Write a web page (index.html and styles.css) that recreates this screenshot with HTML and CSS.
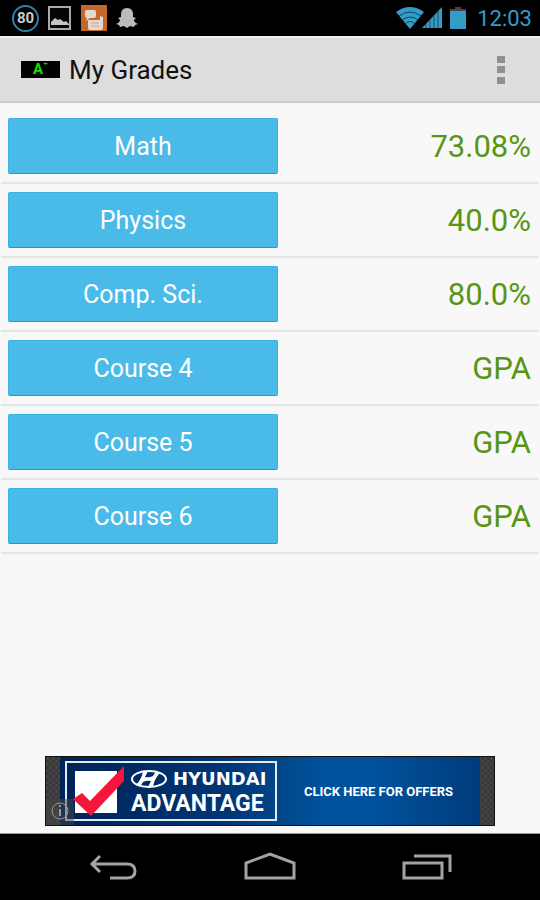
FILE: index.html
```html
<!DOCTYPE html>
<html lang="en">
<head>
    <meta charset="UTF-8">
    <meta name="viewport" content="width=device-width, initial-scale=1.0">
    <title>My Grades</title>
    <link rel="stylesheet" href="styles.css">
</head>
<body>
    <!-- Status bar -->
    <div class="status-bar">
        <div class="notifications">
            <span class="battery-level">80</span>
            <svg width="24" height="26" viewBox="0 0 24 26">
                <rect x="1" y="2" width="21" height="22" fill="#050505" stroke="#aaa" stroke-width="2"/>
                <path d="M3 20v-3l4-4 3 2 2-1 4 3 2-1 3 3v1z" fill="#c4c4c4"/>
            </svg>
            <svg width="26" height="26" viewBox="0 0 26 26">
                <rect width="26" height="26" fill="#c5662b"/>
                <path d="M6 5h7q2 0 2 2v4q0 2-2 2H9l-4 3 1-3q-2 0-2-2V7q0-2 2-2z" fill="#e2d8d0"/>
                <path d="M7 15h12v-4l3 1v11q0 2-2 2H9q-2 0-2-2z" fill="#e2d8d0"/>
                <path d="M10 18h8M10 21h8" stroke="#d5a384"/>
            </svg>
            <svg width="22" height="22" viewBox="0 0 22 22">
                <path d="M11 1c-4 0-6 3-6 6v3l-3 1 2 2c0 2-2 3-4 4l3 1 1 2 4-1 3 2 3-2 4 1 1-2 3-1c-2-1-4-2-4-4l2-2-3-1V7c0-3-2-6-6-6z" fill="#bbb"/>
            </svg>
        </div>
        <div class="system">
            <svg width="48" height="24" viewBox="0 0 48 24">
                <path d="M0 6Q14-4 28 6L14 23z" fill="#359cc8"/>
                <path d="M3 10Q14 2 25 10M6 14Q14 8 22 14M9 18Q14 13 19 18" fill="none" stroke="#0d4259" stroke-width="1"/>
                <path d="M26 22L46 1v21z" fill="#359cc8"/>
                <path d="M30 18v4M34 14v8M38 9v13M42 5v17" stroke="#125069"/>
            </svg>
            <svg class="battery" width="16" height="24" viewBox="0 0 16 24">
                <path d="M5 1h6v2h5v3H0V3h5z" fill="#464646"/>
                <path d="M0 5h16v18H0z" fill="#359cc8"/>
            </svg>
            <span class="clock">12:03</span>
        </div>
    </div>

    <!-- Action bar -->
    <header class="action-bar">
        <span class="app-icon">A<sup>-</sup></span>
        <h1>My Grades</h1>
        <button class="menu-button" aria-label="More options">
            <svg width="8" height="30" viewBox="0 0 8 30">
                <path d="M0 1h8v7H0zM0 11h8v7H0zM0 22h8v7H0z" fill="#919191"/>
            </svg>
        </button>
    </header>

    <!-- Courses -->
    <main>
        <ul class="course-list">
            <li class="course">
                <button class="course-button">Math</button>
                <span class="grade">73.08%</span>
            </li>
            <li class="course">
                <button class="course-button">Physics</button>
                <span class="grade">40.0%</span>
            </li>
            <li class="course">
                <button class="course-button">Comp. Sci.</button>
                <span class="grade">80.0%</span>
            </li>
            <li class="course">
                <button class="course-button">Course 4</button>
                <span class="grade">GPA</span>
            </li>
            <li class="course">
                <button class="course-button">Course 5</button>
                <span class="grade">GPA</span>
            </li>
            <li class="course">
                <button class="course-button">Course 6</button>
                <span class="grade">GPA</span>
            </li>
        </ul>
    </main>

    <!-- Ad banner -->
    <a class="ad" href="#">
        <span class="ad-body">
            <span class="ad-logo">
                <svg width="52" height="52" viewBox="0 0 52 52">
                    <path d="M2 6h42v42H2z" fill="#fff"/>
                    <path d="M0 34l9-6 8 8L51 1v15L18 51z" fill="#f5163b"/>
                </svg>
                <span class="ad-name">
                    <span class="ad-brand">
                        <svg width="36" height="20" viewBox="0 0 36 20">
                            <ellipse cx="18" cy="10" rx="17" ry="8" fill="none" stroke="#fff" stroke-width="2"/>
                            <path d="M12 3l5-1-3 6q4 1 8-1l3-5 4 2q-5 5-7 13l-5 1 3-6q-4-1-8 1l-3 5-4-2q5-5 7-13z" fill="#fff"/>
                        </svg>
                        HYUNDAI
                    </span>
                    <span class="ad-title">ADVANTAGE</span>
                </span>
            </span>
            <span class="ad-offer">CLICK HERE FOR OFFERS</span>
        </span>
        <span class="ad-info">
            <svg width="28" height="26" viewBox="0 0 28 26">
                <circle cx="14" cy="12" r="8" fill="none" stroke="#999" stroke-width="1"/>
                <path d="M14 10v7M14 6v2" stroke="#999" stroke-width="2"/>
            </svg>
        </span>
    </a>

    <!-- Navigation bar -->
    <nav class="nav-bar">
        <button class="nav-button" aria-label="Back">
            <svg width="48" height="30" viewBox="0 0 48 30">
                <path d="M11 4L3 12l8 8M3 12h35q8 0 8 7t-8 7H21" fill="none" stroke="#a3a3a3" stroke-width="3"/>
            </svg>
        </button>
        <button class="nav-button" aria-label="Home">
            <svg width="52" height="30" viewBox="0 0 52 30">
                <path d="M2 26V11L26 2l24 9v15z" fill="none" stroke="#a3a3a3" stroke-width="3"/>
            </svg>
        </button>
        <button class="nav-button" aria-label="Recent apps">
            <svg width="50" height="30" viewBox="0 0 50 30">
                <path d="M2 11h38v15H2zM12 4h36v16" fill="none" stroke="#a3a3a3" stroke-width="3"/>
            </svg>
        </button>
    </nav>
</body>
</html>
```

FILE: styles.css
```css
:root {
    --holo-blue: #359cc8;
    --button-blue: #4abbe8;
    --grade-green: #569614;
    --background: #f8f8f8;
}

* {
    box-sizing: border-box;
}

body {
    font-family: Roboto, sans-serif;
    background: var(--background);
    margin: 0;
    min-height: 100vh;
    display: flex;
    flex-direction: column;
}

button {
    font-family: inherit;
    border: none;
    padding: 0;
    cursor: pointer;
}

svg {
    display: block;
    flex-shrink: 0;
}

.status-bar {
    background: #000;
    height: 36px;
    padding: 0 8px 0 12px;
    display: flex;
    align-items: center;
    justify-content: space-between;
}

.notifications {
    display: flex;
    align-items: center;
    gap: 9px;
}

.battery-level {
    width: 27px;
    height: 27px;
    border: 2px solid #2b84aa;
    border-radius: 50%;
    color: #ccc;
    font-size: 15px;
    font-weight: bold;
    line-height: 23px;
    text-align: center;
}

.system {
    display: flex;
    align-items: center;
}

.battery {
    margin: 0 11px 0 6px;
}

.clock {
    color: var(--holo-blue);
    font-size: 22px;
}

.action-bar {
    background: #ddd;
    height: 67px;
    border-top: 2px solid #f0f0f0;
    border-bottom: 2px solid #cdcdcd;
    padding: 0 20px 0 21px;
    display: flex;
    align-items: center;
}

.app-icon {
    width: 39px;
    height: 17px;
    margin-right: 9px;
    background: #000;
    color: #0be00b;
    font-size: 15px;
    font-weight: bold;
    line-height: 17px;
    text-align: center;
}

.app-icon sup {
    font-size: 12px;
    line-height: 1px;
}

h1 {
    flex: 1;
    margin: 0;
    color: #111;
    font-size: 26px;
    font-weight: normal;
}

.menu-button {
    background: none;
    padding: 0 15px;
}

main {
    flex: 1;
    padding: 7px 1px;
}

.course-list {
    list-style: none;
    margin: 0;
    padding: 0;
}

.course {
    height: 74px;
    padding: 0 8px 0 7px;
    border-bottom: 2px solid #e4e4e4;
    display: flex;
    align-items: center;
    justify-content: space-between;
}

.course-button {
    width: 270px;
    height: 56px;
    background: var(--button-blue);
    border: 1px solid #38b3e3;
    border-bottom-color: #2499c7;
    border-radius: 2px;
    color: #fff;
    font-size: 25px;
}

.grade {
    color: var(--grade-green);
    font-size: 31px;
}

.ad {
    position: relative;
    width: 450px;
    max-width: 100%;
    height: 70px;
    margin: 0 auto 7px;
    padding: 0 14px;
    background: repeating-conic-gradient(#383838 0 25%, #444 0 50%) 0 0 / 6px 6px;
    border: 1px solid #111;
    color: #fff;
    font-weight: bold;
    text-decoration: none;
}

.ad-body {
    height: 100%;
    padding-left: 5px;
    background: linear-gradient(90deg, #002358, #003674 40%, #00529c 62%, #00529c 75%, #003b7c);
    display: flex;
    align-items: center;
}

.ad-logo {
    width: 212px;
    height: 60px;
    padding-left: 6px;
    border: 2px solid #e3eaf3;
    display: flex;
    align-items: center;
    gap: 6px;
}

.ad-name {
    display: flex;
    flex-direction: column;
}

.ad-brand {
    display: flex;
    align-items: center;
    gap: 6px;
    font-family: "DejaVu Sans", sans-serif;
    font-size: 18px;
    line-height: 24px;
}

.ad-title {
    font-size: 23px;
    line-height: 25px;
}

.ad-offer {
    flex: 1;
    font-size: 13px;
    text-align: center;
    white-space: nowrap;
}

/* info badge over the corner of the banner */
.ad-info {
    position: absolute;
    left: 0;
    bottom: 0;
    background: rgba(70, 70, 70, 0.5);
}

.nav-bar {
    background: #000;
    height: 67px;
    border-top: 1px solid #999;
    padding: 0 35px;
    display: flex;
    align-items: center;
}

.nav-button {
    flex: 1;
    background: none;
    display: flex;
    justify-content: center;
}
```
